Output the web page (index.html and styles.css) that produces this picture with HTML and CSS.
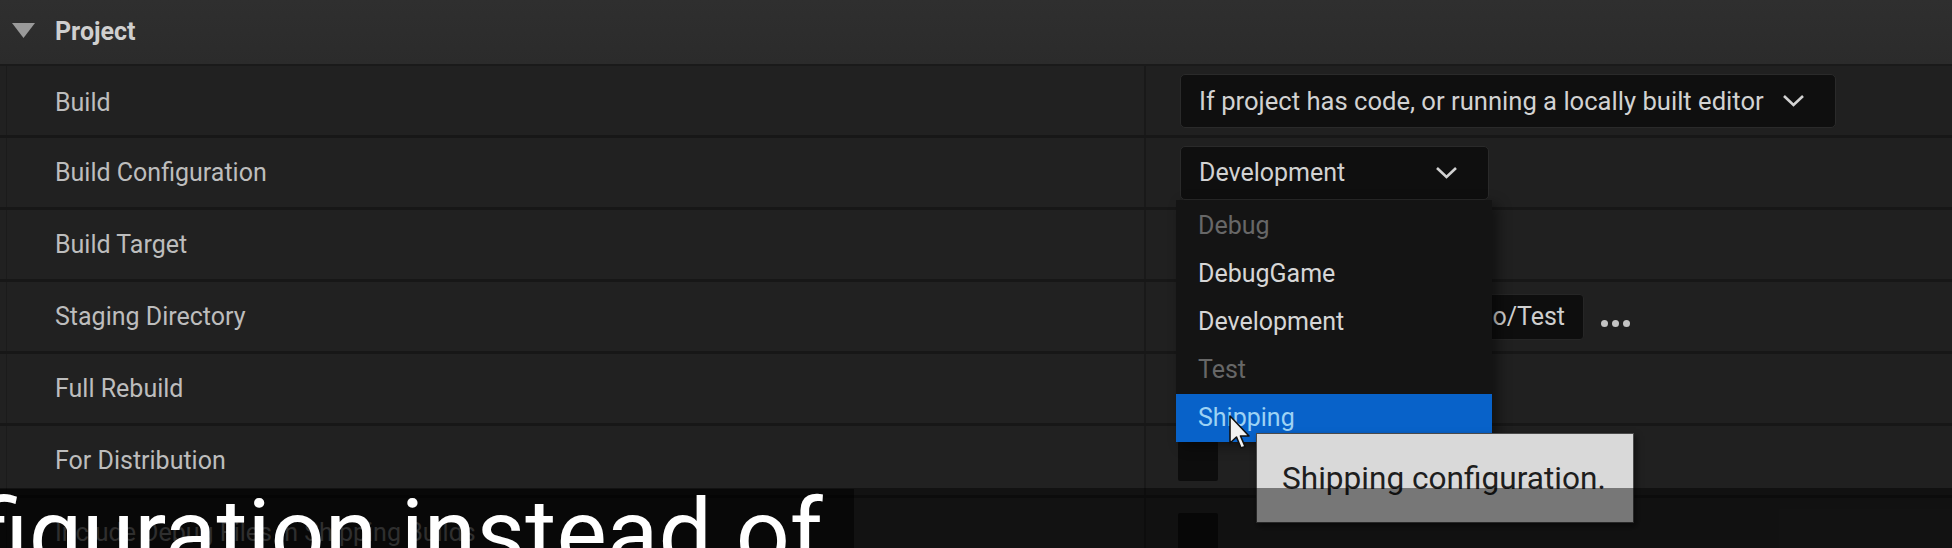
FILE: index.html
```html
<!DOCTYPE html>
<html lang="en">

<head>
    <meta charset="UTF-8">
    <meta name="viewport" content="width=device-width, initial-scale=1.0">
    <title>Project Settings - Packaging</title>
    <link rel="stylesheet" href="styles.css">
</head>

<body>
    <div class="details">
        <div class="category">
            <svg class="category__arrow" width="23" height="15" viewBox="0 0 23 15">
                <polygon points="0,0 23,0 11.5,15" fill="#9a9a9a" />
            </svg>
            <span class="category__title">Project</span>
        </div>

        <div class="prop">
            <div class="prop__name">Build</div>
            <div class="prop__value">
                <div class="combo">
                    <span>If project has code, or running a locally built editor</span>
                    <svg class="combo__chevron" width="23" height="13" viewBox="0 0 23 13">
                        <polyline points="2,2 11.5,11 21,2" fill="none" stroke="#d2d2d2" stroke-width="2.6" />
                    </svg>
                </div>
            </div>
        </div>

        <div class="prop">
            <div class="prop__name">Build Configuration</div>
            <div class="prop__value">
                <div class="combo combo--open">
                    <span>Development</span>
                    <svg class="combo__chevron" width="23" height="13" viewBox="0 0 23 13">
                        <polyline points="2,2 11.5,11 21,2" fill="none" stroke="#d2d2d2" stroke-width="2.6" />
                    </svg>

                    <!-- open dropdown list -->
                    <ul class="menu">
                        <li class="menu__item menu__item--disabled">Debug</li>
                        <li class="menu__item">DebugGame</li>
                        <li class="menu__item">Development</li>
                        <li class="menu__item menu__item--disabled">Test</li>
                        <li class="menu__item menu__item--hover">Shipping</li>
                    </ul>
                </div>
            </div>
        </div>

        <div class="prop">
            <div class="prop__name">Build Target</div>
            <div class="prop__value"></div>
        </div>

        <div class="prop">
            <div class="prop__name">Staging Directory</div>
            <div class="prop__value">
                <div class="path">C:/Projects/Demo/Test</div>
                <div class="dots"><span></span><span></span><span></span></div>
            </div>
        </div>

        <div class="prop">
            <div class="prop__name">Full Rebuild</div>
            <div class="prop__value"></div>
        </div>

        <div class="prop">
            <div class="prop__name">For Distribution</div>
            <div class="prop__value">
                <div class="check"></div>
            </div>
        </div>

        <div class="prop">
            <div class="prop__name">Include Debug Files in Shipping Builds</div>
            <div class="prop__value">
                <div class="check"></div>
            </div>
        </div>
    </div>

    <div class="tooltip">Shipping configuration.</div>

    <svg class="cursor" width="22" height="36" viewBox="0 0 22 36">
        <polygon points="1,1 1,28 7.5,22 12,33 16,31.5 11.5,21 20,21" fill="#f2f2f2" stroke="#111" stroke-width="1.6"
            stroke-linejoin="round" />
    </svg>

    <!-- video caption band -->
    <div class="caption-band"></div>
    <div class="caption">
        <span class="caption__text">figuration instead of</span>
    </div>
</body>

</html>
```

FILE: styles.css
```css
/* Details panel */
html,
body {
    margin: 0;
    height: 548px;
    overflow: hidden;
}

body {
    position: relative;
    background-color: #1f1f1f;
    font-family: Roboto, "Liberation Sans", sans-serif;
}

.details {
    display: flex;
    flex-direction: column;
}

.category {
    display: flex;
    align-items: center;
    height: 64px;
    padding-left: 12px;
    background: linear-gradient(#2f2f2f, #2b2b2b);
    border-bottom: 2px solid #1a1a1a;
}

.category__arrow {
    margin-top: -4px;
}

.category__title {
    margin-left: 20px;
    margin-top: -2px;
    font-size: 25px;
    font-weight: 700;
    color: #cfcfcf;
}

.prop {
    display: grid;
    grid-template-columns: 1146px 1fr;
    height: 69px;
    border-bottom: 3px solid #171717;
    background-color: #212121;
}

.prop__name {
    display: flex;
    align-items: center;
    padding-left: 48px;
    margin-left: 6px;
    border-left: 1px solid #1b1b1b;
    border-right: 2px solid #191919;
    font-size: 25px;
    color: #bdbdbd;
}

.prop:nth-child(2) .prop__name {
    padding-top: 3px;
}

.prop__value {
    display: flex;
    align-items: center;
    gap: 17px;
    padding-left: 34px;
    background-color: #202020;
}

/* Combo boxes */
.combo {
    position: relative;
    display: flex;
    align-items: center;
    gap: 18px;
    height: 52px;
    padding: 0 30px 0 18px;
    background-color: #0f0f0f;
    border: 1px solid #2a2a2a;
    border-radius: 5px;
    font-size: 25.6px;
    color: #d2d2d2;
}

.combo--open {
    width: 259px;
    font-size: 25px;
}

.combo--open .combo__chevron {
    margin-left: auto;
}

.menu {
    position: absolute;
    top: 53px;
    left: -5px;
    width: 316px;
    margin: 0;
    padding: 2px 0 0;
    list-style: none;
    background-color: #141414;
    box-shadow: 6px 4px 12px rgba(0, 0, 0, 0.45);
    z-index: 2;
}

.menu__item {
    display: flex;
    align-items: center;
    height: 48px;
    padding-left: 22px;
    font-size: 25px;
    color: #d6d6d6;
}

.menu__item--disabled {
    color: #676767;
}

.menu__item--hover {
    background-color: #0862c9;
    color: #9dd2f4;
}

/* Staging directory */
.path {
    display: flex;
    align-items: center;
    justify-content: flex-end;
    width: 384px;
    height: 44px;
    padding-right: 18px;
    background-color: #0e0e0e;
    border: 1px solid #262626;
    border-radius: 4px;
    font-size: 25px;
    color: #cfcfcf;
}

.dots {
    display: flex;
    gap: 4px;
    margin-top: 14px;
}

.dots span {
    width: 7px;
    height: 7px;
    border-radius: 50%;
    background-color: #c4c4c4;
}

.check {
    width: 40px;
    height: 40px;
    margin-left: -2px;
    background-color: #0d0d0d;
    border-radius: 2px;
}

/* Tooltip + cursor */
.tooltip {
    position: absolute;
    left: 1256px;
    top: 433px;
    width: 351px;
    height: 88px;
    padding-left: 25px;
    display: flex;
    align-items: center;
    background-color: #d9d9d9;
    border: 1px solid #4a4a4a;
    box-shadow: 2px 3px 6px rgba(0, 0, 0, 0.5);
    font-size: 31.6px;
    color: #1e1e1e;
    z-index: 3;
}

.cursor {
    position: absolute;
    left: 1229px;
    top: 415px;
    z-index: 4;
}

/* Video caption */
.caption-band {
    position: absolute;
    left: 0;
    right: 0;
    top: 488px;
    bottom: 0;
    background-color: rgba(0, 0, 0, 0.45);
    z-index: 5;
}

.caption {
    position: absolute;
    left: 0;
    top: 489px;
    width: 854px;
    bottom: 0;
    overflow: hidden;
    background-color: rgba(0, 0, 0, 0.55);
    z-index: 6;
}

.caption__text {
    display: block;
    margin-top: -3px;
    margin-left: -24px;
    font-size: 95px;
    line-height: 95px;
    color: #ffffff;
    white-space: nowrap;
}
```
